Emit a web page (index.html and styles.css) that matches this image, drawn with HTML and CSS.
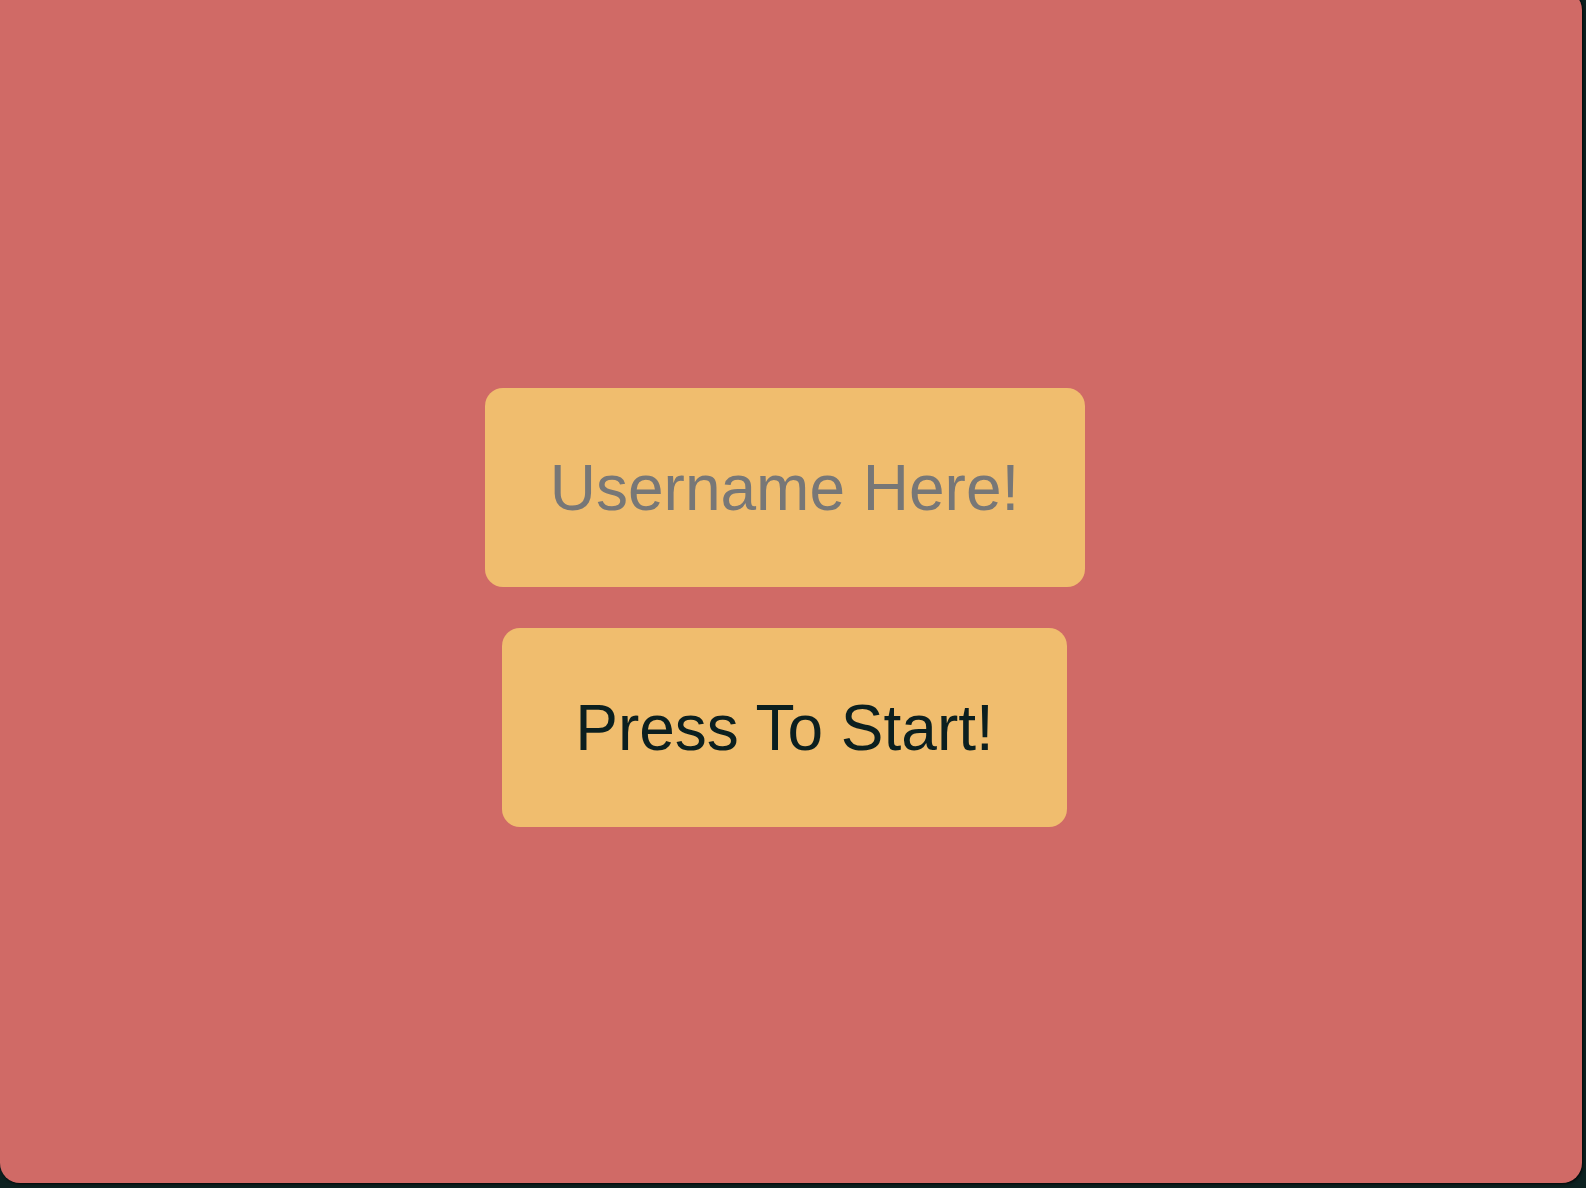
FILE: index.html
```
<!DOCTYPE html>
<html>
<head>
<meta charset="utf-8">
<link rel="stylesheet" href="styles.css">
</head>
<body>
<main class="panel">
  <input class="field" type="text" placeholder="Username Here!">
  <button class="start">Press To Start!</button>
</main>
</body>
</html>
```
FILE: styles.css
```
html, body {
  margin: 0;
  padding: 0;
}
body {
  background: #0c2120;
  width: 1586px;
  height: 1188px;
  overflow: hidden;
  font-family: "Liberation Sans", Arial, sans-serif;
}
.panel {
  box-sizing: border-box;
  width: 1582px;
  height: 1193px;
  margin-top: -10px;
  background: #d06a66;
  border-radius: 0 20px 20px 20px;
  box-shadow: 1px 1px 3px rgba(0, 0, 0, 0.85);
  display: flex;
  flex-direction: column;
  align-items: center;
  gap: 41px;
  padding-top: 398px;
  padding-right: 13px;
}
.field, .start {
  box-sizing: border-box;
  height: 199px;
  border: none;
  border-radius: 18px;
  background: #f0bd6e;
  font-family: "Liberation Sans", Arial, sans-serif;
  font-size: 64px;
  text-align: center;
  outline: none;
  padding: 0;
  margin: 0;
}
.field {
  width: 600px;
  color: #0b1f1f;
}
.field::placeholder {
  color: #777777;
  opacity: 1;
}
.start {
  width: 565px;
  color: #0b1f1f;
}
```
